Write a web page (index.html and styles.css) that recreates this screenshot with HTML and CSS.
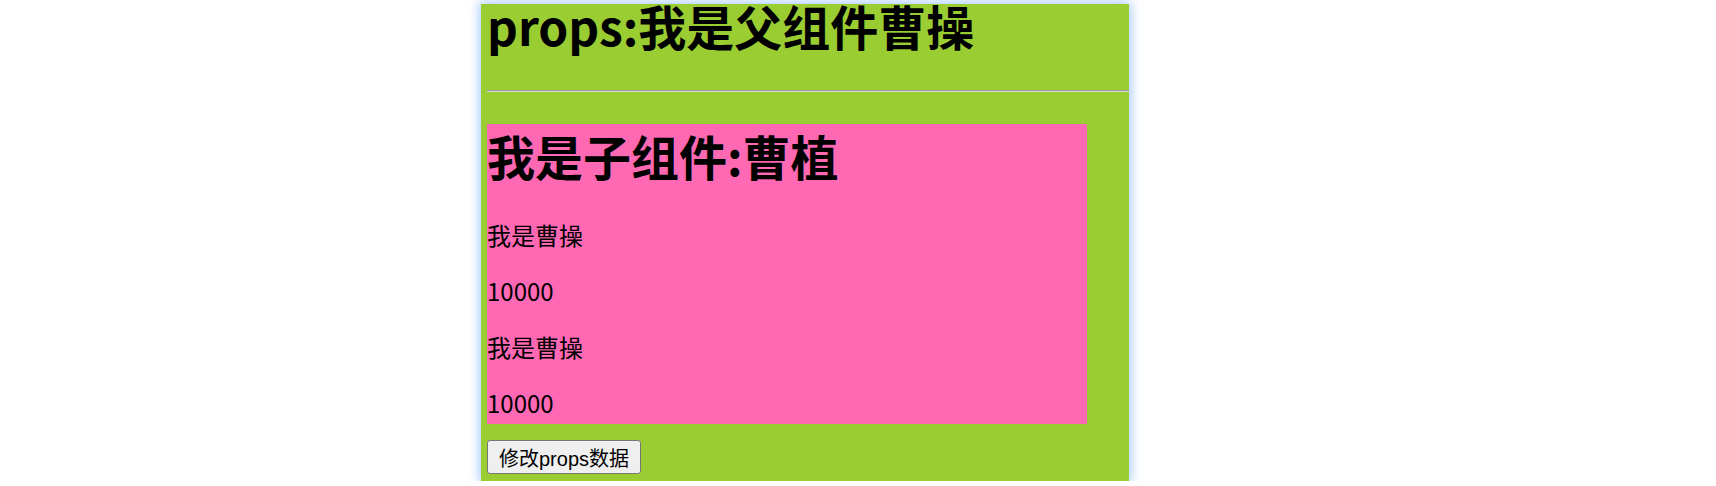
FILE: index.html
```html
<!DOCTYPE html>
<html lang="zh-CN">
<head>
<meta charset="utf-8">
<title>props</title>
<link rel="stylesheet" href="styles.css">
</head>
<body>
<div class="parent">
  <h1 class="title">props:我是父组件曹操</h1>
  <hr class="divider">
  <div class="child">
    <h1 class="child-title">我是子组件:曹植</h1>
    <p class="line">我是曹操</p>
    <p class="line">10000</p>
    <p class="line">我是曹操</p>
    <p class="line">10000</p>
  </div>
  <div class="actions">
    <button class="btn" type="button">修改props数据</button>
  </div>
</div>
</body>
</html>
```

FILE: styles.css
```css
html, body {
  margin: 0;
  padding: 0;
  background: #ffffff;
}

body {
  font-family: "Noto Sans CJK SC", sans-serif;
  color: #000000;
  padding: 4px 0 0 481px;
}

.parent {
  box-sizing: border-box;
  width: 648px;
  height: 477px;
  padding: 0 0 0 6px;
  background: #9acd32;
  box-shadow: 0 0 10px 2px rgba(130, 180, 255, 0.7);
}

.title {
  margin: 0 0 43px 0;
  font-size: 48px;
  line-height: 43px;
  font-weight: 700;
  white-space: nowrap;
}

.divider {
  margin: 0 0 32px 0;
  height: 0;
  border: 0;
  border-top: 1px solid #9a9a9a;
  border-bottom: 1px solid #d6d6d6;
}

.child {
  width: 600px;
  height: 300px;
  margin: 0 0 16px 0;
  background: #ff69b4;
  display: flow-root;
}

.child-title {
  margin: 0 0 32px 0;
  font-size: 48px;
  line-height: 63px;
  font-weight: 700;
  white-space: nowrap;
}

.line {
  margin: 0 0 24px 0;
  font-size: 24px;
  line-height: 32px;
}

.actions {
  display: flex;
}

.btn {
  box-sizing: border-box;
  width: 154px;
  height: 34px;
  padding: 0;
  text-align: center;
  white-space: nowrap;
  font-family: "Liberation Sans", "Noto Sans CJK SC", sans-serif;
  font-size: 20px;
  color: #000000;
  background: #efefef;
  border: 1px solid #767676;
  border-radius: 3px;
}
```
